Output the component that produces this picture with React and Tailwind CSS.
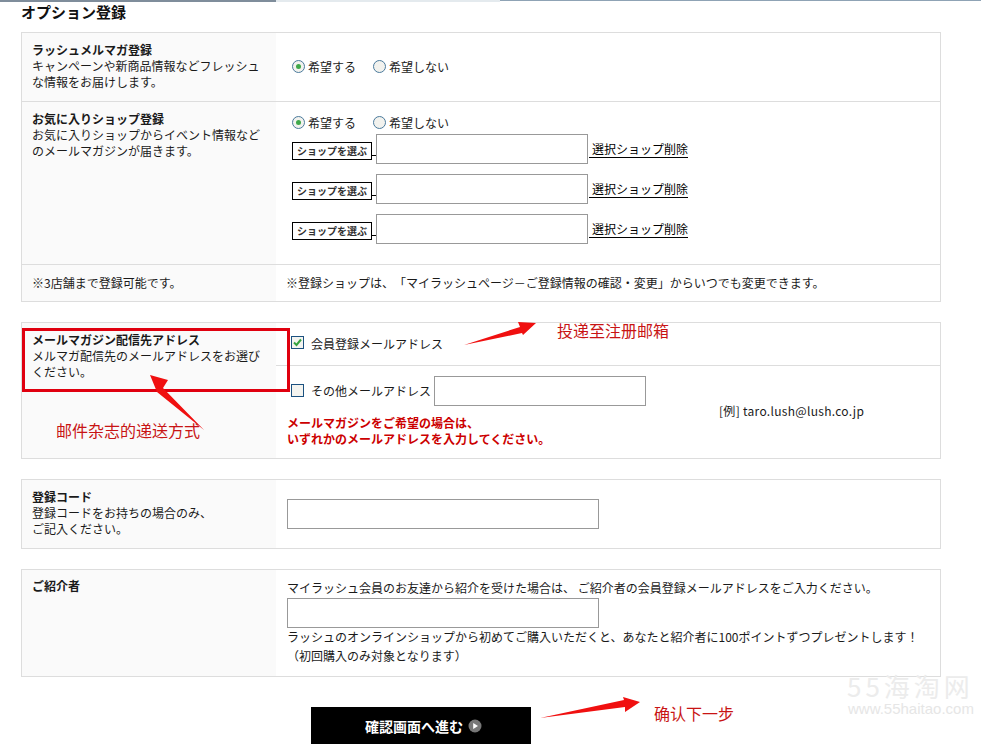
const jp = { fontFamily: '"Noto Sans CJK JP", sans-serif' };

function Radio({ on }) {
  return (
    <span className="inline-flex w-[13px] h-[13px] rounded-full border border-[#4a7a9c] bg-[#f2f2ee] items-center justify-center shrink-0">
      {on && <span className="w-[5px] h-[5px] rounded-full bg-[#3fa84a]" />}
    </span>
  );
}

function Check({ on }) {
  return (
    <span className="inline-flex w-[13px] h-[13px] border border-[#1c5180] bg-[#f4f4f0] items-center justify-center shrink-0">
      {on && (
        <svg width="9" height="9" viewBox="0 0 9 9">
          <path d="M1 4.5 L3.5 7 L8 1.5" fill="none" stroke="#35a33f" strokeWidth="2" />
        </svg>
      )}
    </span>
  );
}

function RadioPair() {
  return (
    <div className="flex items-center h-4">
      <Radio on />
      <span className="ml-[3px] mt-[1px] w-[65px]">希望する</span>
      <Radio />
      <span className="ml-[3px] mt-[1px]">希望しない</span>
    </div>
  );
}

function ShopRow() {
  return (
    <div className="flex h-[30px] mb-[10px]">
      <button className="mt-[8px] w-[80px] h-[18px] border border-black bg-white text-[10px] leading-[16px] font-bold text-[#333] text-center">
        ショップを選ぶ
      </button>
      <span className="w-[4px] h-[14px] mt-[8px] border-b border-black" />
      <div className="w-[212px] h-[30px] border border-[#999] bg-white" />
      <a className="ml-[1px] mt-[7px] h-[17px] pl-[3px] border-b border-black text-black leading-4">選択ショップ削除</a>
    </div>
  );
}

function Field({ className = "" }) {
  return <div className={"h-[30px] border border-[#999] bg-white " + className} />;
}

export default function App() {
  return (
    <div className="relative w-[981px] h-[744px] overflow-hidden bg-white text-[12px] leading-4 text-[#1a1a1a] [text-spacing-trim:space-all]" style={jp}>
      <div className="flex h-[2px]">
        <div className="w-[276px] bg-[#7f8d9b]" />
        <div className="w-[224px] bg-[#e4eaee]" />
        <div className="flex-1 h-px bg-[#8fa3b5]" />
      </div>

      <h2 className="ml-[21px] h-[30px] text-[15px] leading-[20px] font-bold text-[#111]">オプション登録</h2>

      <div className="ml-[21px] w-[920px] border border-[#ddd]">
        <div className="flex h-[69px] border-b border-[#ddd]">
          <div className="w-[254px] bg-[#fafafa] pl-[10px] pr-2 pt-[9px]">
            <div className="font-bold">ラッシュメルマガ登録</div>
            <div>キャンペーンや新商品情報などフレッシュな情報をお届けします。</div>
          </div>
          <div className="pl-[16px] pt-[25px]"><RadioPair /></div>
        </div>
        <div className="flex h-[163px] border-b border-[#ddd]">
          <div className="w-[254px] bg-[#fafafa] pl-[10px] pr-2 pt-[9px]">
            <div className="font-bold">お気に入りショップ登録</div>
            <div>お気に入りショップからイベント情報などのメールマガジンが届きます。</div>
          </div>
          <div className="pl-[16px] pt-[12px]">
            <RadioPair />
            <div className="mt-[4px]">
              <ShopRow />
              <ShopRow />
              <ShopRow />
            </div>
          </div>
        </div>
        <div className="flex h-[36px]">
          <div className="w-[254px] bg-[#fafafa] pl-[10px] flex items-center">※3店舗まで登録可能です。</div>
          <div className="pl-[10px] flex items-center">※登録ショップは、「マイラッシュページ－ご登録情報の確認・変更」からいつでも変更できます。</div>
        </div>
      </div>

      <div className="ml-[21px] mt-[20px] w-[920px] h-[137px] border border-[#ddd] flex">
        <div className="w-[254px] bg-[#fafafa] pl-[10px] pr-2 pt-[9px]">
          <div className="font-bold">メールマガジン配信先アドレス</div>
          <div>メルマガ配信先のメールアドレスをお選びください。</div>
        </div>
        <div className="flex-1">
          <div className="h-[43px] border-b border-[#ddd] pl-[15px] pt-[13px] flex items-start">
            <Check on />
            <span className="ml-[7px] leading-[16px]">会員登録メールアドレス</span>
          </div>
          <div className="pl-[11px]">
            <div className="flex pl-[4px] pt-[10px] h-[44px]">
              <span className="mt-[8px]"><Check /></span>
              <span className="ml-[7px] mt-[7px]">その他メールアドレス</span>
              <Field className="ml-[3px] w-[212px]" />
              <span className="ml-[73px] mt-[27px] tracking-[0.3px]">[例] taro.lush@lush.co.jp</span>
            </div>
            <div className="font-bold text-[#cc0000] mt-[5px]">
              メールマガジンをご希望の場合は、<br />いずれかのメールアドレスを入力してください。
            </div>
          </div>
        </div>
      </div>

      <div className="ml-[21px] mt-[20px] w-[920px] h-[70px] border border-[#ddd] flex">
        <div className="w-[254px] bg-[#fafafa] pl-[10px] pt-[9px]">
          <div className="font-bold">登録コード</div>
          <div>登録コードをお持ちの場合のみ、<br />ご記入ください。</div>
        </div>
        <div className="pl-[11px] pt-[19px]"><Field className="w-[312px]" /></div>
      </div>

      <div className="ml-[21px] mt-[20px] w-[920px] h-[108px] border border-[#ddd] flex">
        <div className="w-[254px] bg-[#fafafa] pl-[10px] pt-[8px] font-bold">ご紹介者</div>
        <div className="pl-[11px] pt-[10px]">
          <div>マイラッシュ会員のお友達から紹介を受けた場合は、 ご紹介者の会員登録メールアドレスをご入力ください。</div>
          <Field className="w-[312px] mt-[2px]" />
          <div className="mt-[-1px] leading-[19px]">ラッシュのオンラインショップから初めてご購入いただくと、あなたと紹介者に100ポイントずつプレゼントします！<br />（初回購入のみ対象となります）</div>
        </div>
      </div>

      <button className="ml-[311px] mt-[30px] w-[220px] h-[37px] bg-black text-white text-[14px] font-bold flex items-center pl-[54px]">
        確認画面へ進む
        <svg className="ml-[5px]" width="14" height="14" viewBox="0 0 14 14">
          <circle cx="7" cy="7" r="6.5" fill="#777" />
          <path d="M5.2 4 L10 7 L5.2 10 Z" fill="#fff" />
        </svg>
      </button>

      {/* Red annotations laid over the page */}
      <div className="absolute left-[22px] top-[328px] w-[268px] h-[64px] border-[3px] border-[#e0000f]" />
      <svg className="absolute left-0 top-0 pointer-events-none" width="981" height="744">
        <polygon points="464,345 520,327 518,322 536,323 523,335 522,333" fill="#f01010" />
        <polygon points="150,375 168,380 163,388 204,430 157,392" fill="#f01010" />
        <polygon points="540,718 624,700 623,697 640,702 625,712 625,707" fill="#f01010" />
      </svg>
      <span className="absolute left-[56px] top-[420px] text-[16px] leading-[20px] text-[#c81414]" style={{ fontFamily: '"Noto Sans CJK SC", sans-serif' }}>邮件杂志的递送方式</span>
      <span className="absolute left-[557px] top-[320px] text-[16px] leading-[20px] text-[#c81414]" style={{ fontFamily: '"Noto Sans CJK SC", sans-serif' }}>投递至注册邮箱</span>
      <span className="absolute left-[654px] top-[703px] text-[16px] leading-[20px] text-[#c81414]" style={{ fontFamily: '"Noto Sans CJK SC", sans-serif' }}>确认下一步</span>

      {/* Watermark */}
      <span className="absolute left-[847px] top-[672px] text-[26px] leading-[28px] text-[#ececec] tracking-[4px]" style={{ fontFamily: '"Noto Sans CJK SC", sans-serif' }}>55海淘网</span>
      <span className="absolute left-[848px] top-[702px] text-[15px] leading-[14px] text-[#e6e6e6]" style={{ fontFamily: '"Liberation Sans", sans-serif' }}>www.55haitao.com</span>
    </div>
  );
}
